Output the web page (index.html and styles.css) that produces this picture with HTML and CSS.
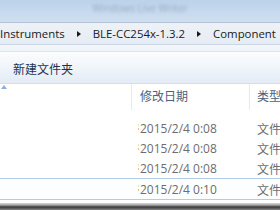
FILE: index.html
```html
<!DOCTYPE html>
<html>
<head>
<meta charset="utf-8">
<link rel="stylesheet" href="styles.css">
</head>
<body>
<div class="window">
  <div class="titlebar"><span class="title">Windows Live Writer</span></div>
  <div class="addressbar">
    <span class="crumb">Instruments</span>
    <span class="chev"></span>
    <span class="crumb">BLE-CC254x-1.3.2</span>
    <span class="chev"></span>
    <span class="crumb">Component</span>
  </div>
  <div class="spacer"></div>
  <div class="toolbar"><span class="tbtn">新建文件夹</span></div>
  <div class="list">
    <div class="header">
      <div class="hcol name"><span class="sort"></span></div>
      <div class="hcol date">修改日期</div>
      <div class="hcol type">类型</div>
    </div>
    <div class="rows">
      <div class="row"><span class="name"><i class="dot"></i></span><span class="date">2015/2/4 0:08</span><span class="type">文件</span></div>
      <div class="row"><span class="name"><i class="dot"></i></span><span class="date">2015/2/4 0:08</span><span class="type">文件</span></div>
      <div class="row"><span class="name"><i class="dot"></i></span><span class="date">2015/2/4 0:08</span><span class="type">文件</span></div>
      <div class="row hover"><span class="name"><i class="dot"></i></span><span class="date">2015/2/4 0:10</span><span class="type">文件</span></div>
    </div>
  </div>
  <div class="bottom"></div>
</div>
</body>
</html>
```
FILE: styles.css
```css
html, body {
  margin: 0;
  padding: 0;
  width: 280px;
  height: 210px;
  overflow: hidden;
  background: #ffffff;
}
.window {
  width: 280px;
  height: 210px;
  display: flex;
  flex-direction: column;
  overflow: hidden;
}
.titlebar {
  height: 22px;
  flex: none;
  background: linear-gradient(#bcd2ea, #cfdff0);
  display: flex;
  justify-content: center;
  align-items: flex-start;
  padding-top: 2px;
  box-sizing: border-box;
}
.title {
  font-family: "Open Sans", sans-serif;
  font-size: 10px;
  color: rgba(60, 70, 90, 0.3);
  filter: blur(1.4px);
  line-height: 12px;
}
.addressbar {
  height: 21px;
  flex: none;
  border-top: 1px solid #b4c3d6;
  background: linear-gradient(#eef2f7, #e6ecf3);
  display: flex;
  align-items: center;
  font-family: "Open Sans", sans-serif;
  font-size: 11.4px;
  color: #1a1a1a;
  white-space: nowrap;
}
.crumb {
  line-height: 20px;
  flex: none;
}
.chev {
  flex: none;
  width: 0;
  height: 0;
  border-left: 4px solid #1a1a1a;
  border-top: 3.5px solid transparent;
  border-bottom: 3.5px solid transparent;
  margin: 0 12px 0 12px;
}
.spacer {
  height: 6px;
  flex: none;
  border-top: 1px solid #c9d6e5;
  background: linear-gradient(#f4f7fb, #eef3f8);
}
.toolbar {
  height: 31px;
  flex: none;
  border-top: 1px solid #dde6f0;
  border-bottom: 1px solid #d5dfeb;
  background: linear-gradient(#fbfcfe, #f0f5fa 50%, #e3ebf5);
  display: flex;
  align-items: center;
  padding-left: 13px;
}
.tbtn {
  font-family: "Noto Sans CJK SC", sans-serif;
  font-size: 12px;
  color: #1e3250;
  line-height: 14px;
  margin-top: 2px;
}
.list {
  flex: none;
  background: #ffffff;
}
.header {
  height: 26px;
  display: flex;
  font-family: "Noto Sans CJK SC", sans-serif;
  font-size: 12px;
  color: #4c607c;
  white-space: nowrap;
}
.hcol {
  display: flex;
  align-items: center;
  flex: none;
  padding-bottom: 4px;
  box-sizing: border-box;
}
.hcol.name {
  width: 131px;
  align-items: flex-start;
  padding-bottom: 0;
}
.hcol.date {
  width: 118px;
  border-left: 1px solid #e6ebf1;
  padding-left: 8px;
}
.hcol.type {
  border-left: 1px solid #e6ebf1;
  padding-left: 7px;
}
.sort {
  width: 0;
  height: 0;
  margin: 1px 0 0 1px;
  border-bottom: 4px solid #8fb0d6;
  border-left: 3.5px solid transparent;
  border-right: 3.5px solid transparent;
}
.rows {
  padding-top: 8px;
}
.row {
  height: 20px;
  display: flex;
  align-items: center;
  font-family: "Open Sans", sans-serif;
  font-size: 12px;
  color: #6d6d6d;
  box-sizing: border-box;
  white-space: nowrap;
}
.row.hover {
  height: 22px;
  border-top: 1px solid #b3cbe6;
  border-bottom: 1px solid #b3cbe6;
  background: #fdfeff;
}
.row .name {
  width: 140px;
  flex: none;
  height: 100%;
  position: relative;
}
.dot {
  position: absolute;
  left: 138px;
  top: 6px;
  width: 1px;
  height: 6px;
  opacity: 0.6;
  background: linear-gradient(#f0d070 0, #f0d070 2px, transparent 2px, transparent 4px, #e09040 4px);
}
.row .date {
  width: 117px;
  flex: none;
}
.row .type {
  flex: none;
  font-family: "Noto Sans CJK SC", sans-serif;
}
.bottom {
  flex: 1;
  margin-top: 3px;
  background: linear-gradient(#d8d8d8 0, #a8a8a8 2px, #3a3a3a 4px, #505050 5px, #8a8a8a 7px, #a0a0a0);
}
```
